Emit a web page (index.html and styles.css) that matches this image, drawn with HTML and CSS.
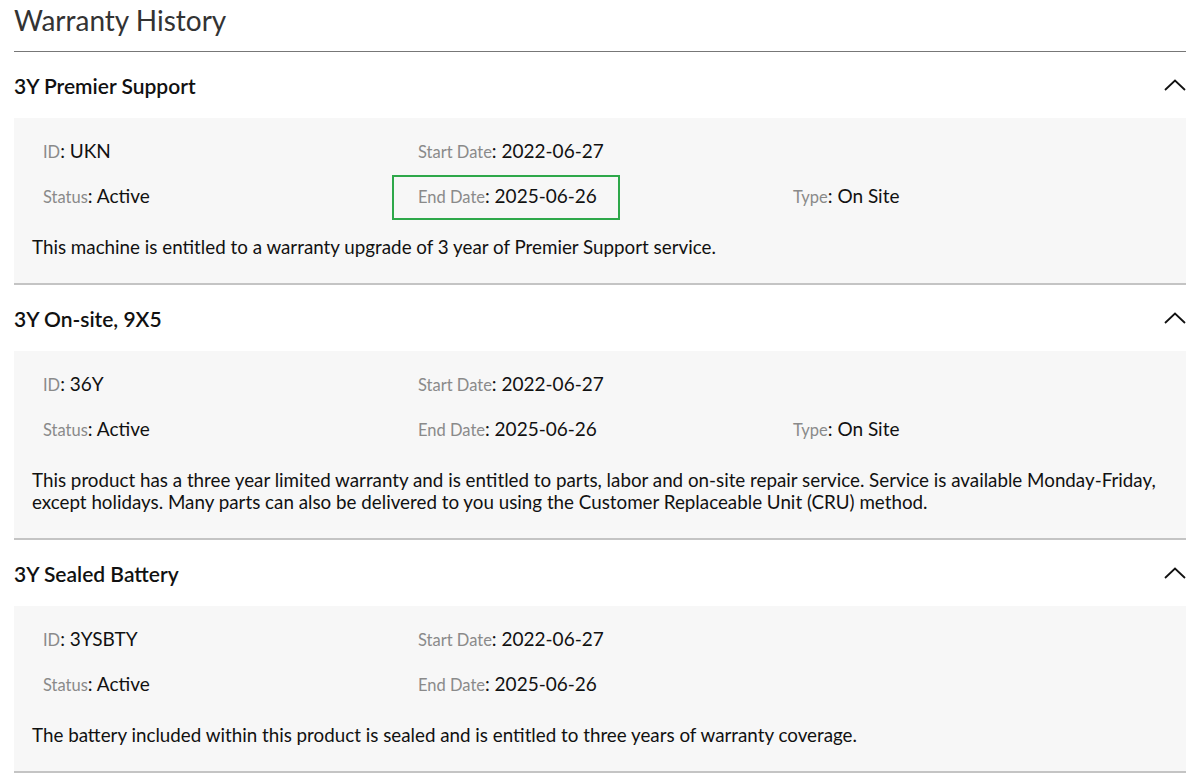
FILE: index.html
```html
<!DOCTYPE html>
<html lang="en">
<head>
    <meta charset="UTF-8">
    <meta name="viewport" content="width=device-width, initial-scale=1.0">
    <title>Warranty History</title>
    <link rel="stylesheet" href="styles.css">
</head>
<body>

<div class="warranty-page">
    <h1 class="page-title">Warranty History</h1>

    <div class="warranty-item">
        <div class="item-header">
            <h2>3Y Premier Support</h2>
            <svg class="chevron" width="22" height="12" viewBox="0 0 22 12"><path d="M1 11 L11 1.5 L21 11" fill="none" stroke="#111" stroke-width="1.8"/></svg>
        </div>
        <div class="item-body">
            <div class="fields">
                <div class="field"><span class="label">ID</span>: UKN</div>
                <div class="field"><span class="label">Start Date</span>: 2022-06-27</div>
                <div class="field"></div>
                <div class="field"><span class="label">Status</span>: Active</div>
                <div class="field highlight"><span class="label">End Date</span>: 2025-06-26</div>
                <div class="field"><span class="label">Type</span>: On Site</div>
            </div>
            <p class="description">This machine is entitled to a warranty upgrade of 3 year of Premier Support service.</p>
        </div>
    </div>

    <div class="warranty-item">
        <div class="item-header">
            <h2>3Y On-site, 9X5</h2>
            <svg class="chevron" width="22" height="12" viewBox="0 0 22 12"><path d="M1 11 L11 1.5 L21 11" fill="none" stroke="#111" stroke-width="1.8"/></svg>
        </div>
        <div class="item-body">
            <div class="fields">
                <div class="field"><span class="label">ID</span>: 36Y</div>
                <div class="field"><span class="label">Start Date</span>: 2022-06-27</div>
                <div class="field"></div>
                <div class="field"><span class="label">Status</span>: Active</div>
                <div class="field"><span class="label">End Date</span>: 2025-06-26</div>
                <div class="field"><span class="label">Type</span>: On Site</div>
            </div>
            <p class="description">This product has a three year limited warranty and is entitled to parts, labor and on-site repair service. Service is available Monday-Friday, except holidays. Many parts can also be delivered to you using the Customer Replaceable Unit (CRU) method.</p>
        </div>
    </div>

    <div class="warranty-item">
        <div class="item-header">
            <h2>3Y Sealed Battery</h2>
            <svg class="chevron" width="22" height="12" viewBox="0 0 22 12"><path d="M1 11 L11 1.5 L21 11" fill="none" stroke="#111" stroke-width="1.8"/></svg>
        </div>
        <div class="item-body">
            <div class="fields">
                <div class="field"><span class="label">ID</span>: 3YSBTY</div>
                <div class="field"><span class="label">Start Date</span>: 2022-06-27</div>
                <div class="field"></div>
                <div class="field"><span class="label">Status</span>: Active</div>
                <div class="field"><span class="label">End Date</span>: 2025-06-26</div>
                <div class="field"></div>
            </div>
            <p class="description">The battery included within this product is sealed and is entitled to three years of warranty coverage.</p>
        </div>
    </div>
</div>

</body>
</html>
```

FILE: styles.css
```css
:root {
    --text-color: #111;
    --label-color: #8a8a8a;
    --body-bg: #f7f7f7;
}

body {
    margin: 0;
    background-color: #ffffff;
    font-family: 'Lato', 'Noto Sans', sans-serif;
    color: var(--text-color);
}

.warranty-page {
    padding: 0 14px;
}

.page-title {
    margin: 0;
    font-size: 28px;
    font-weight: 400;
    line-height: 40px;
    color: #333;
    padding-bottom: 11px;
    border-bottom: 1px solid #777;
}

.item-header {
    display: flex;
    justify-content: space-between;
    align-items: center;
    height: 66px;
}

.item-header h2 {
    margin: 0;
    font-size: 21px;
    font-weight: 600;
    color: #111;
}

.item-body {
    background-color: var(--body-bg);
    padding: 22px 18px 25px;
    border-bottom: 2px solid #c4c4c4;
}

.fields {
    display: grid;
    grid-template-columns: repeat(3, 375px);
    row-gap: 23px;
    padding-left: 11px;
}

.field {
    font-size: 19px;
    line-height: 22px;
    height: 22px;
    position: relative;
}

.label {
    font-size: 16.5px;
    line-height: 1;
    color: var(--label-color);
}

/* green marker around the end date */
.highlight::after {
    content: '';
    position: absolute;
    top: -10px;
    bottom: -13px;
    left: -26px;
    width: 224px;
    border: 2px solid #2ea84a;
}

.description {
    margin: 29px 0 0;
    font-size: 18.8px;
    line-height: 22px;
}
```
